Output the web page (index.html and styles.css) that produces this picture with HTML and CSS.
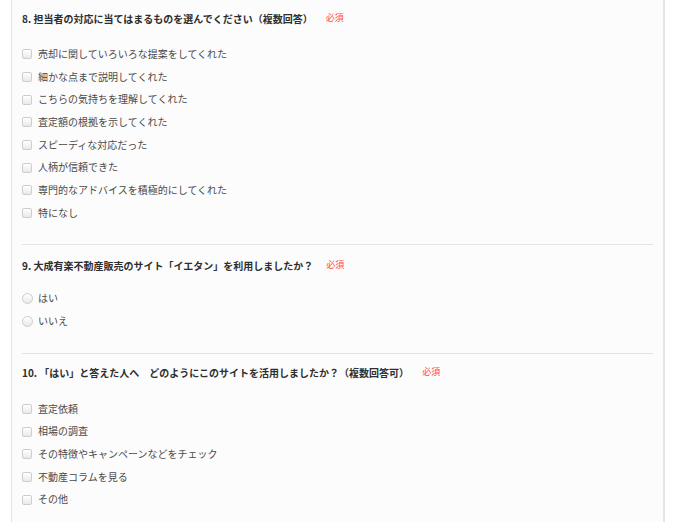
FILE: index.html
```html
<!DOCTYPE html>
<html lang="ja">

<head>
    <meta charset="UTF-8">
    <meta name="viewport" content="width=device-width, initial-scale=1.0">
    <title>アンケート</title>
    <link rel="stylesheet" href="styles.css">
</head>

<body>

    <div class="survey-container">

        <div class="question first">
            <h3>8. 担当者の対応に当てはまるものを選んでください（複数回答）<span class="required">必須</span></h3>
            <ul class="choices">
                <li><label><input type="checkbox" name="q8[]">売却に関していろいろな提案をしてくれた</label></li>
                <li><label><input type="checkbox" name="q8[]">細かな点まで説明してくれた</label></li>
                <li><label><input type="checkbox" name="q8[]">こちらの気持ちを理解してくれた</label></li>
                <li><label><input type="checkbox" name="q8[]">査定額の根拠を示してくれた</label></li>
                <li><label><input type="checkbox" name="q8[]">スピーディな対応だった</label></li>
                <li><label><input type="checkbox" name="q8[]">人柄が信頼できた</label></li>
                <li><label><input type="checkbox" name="q8[]">専門的なアドバイスを積極的にしてくれた</label></li>
                <li><label><input type="checkbox" name="q8[]">特になし</label></li>
            </ul>
        </div>

        <div class="question radio-question">
            <h3>9. 大成有楽不動産販売のサイト「イエタン」を利用しましたか？<span class="required">必須</span></h3>
            <ul class="choices">
                <li><label><input type="radio" name="q9">はい</label></li>
                <li><label><input type="radio" name="q9">いいえ</label></li>
            </ul>
        </div>

        <div class="question last">
            <h3>10. 「はい」と答えた人へ　どのようにこのサイトを活用しましたか？（複数回答可）<span class="required">必須</span></h3>
            <ul class="choices">
                <li><label><input type="checkbox" name="q10[]">査定依頼</label></li>
                <li><label><input type="checkbox" name="q10[]">相場の調査</label></li>
                <li><label><input type="checkbox" name="q10[]">その特徴やキャンペーンなどをチェック</label></li>
                <li><label><input type="checkbox" name="q10[]">不動産コラムを見る</label></li>
                <li><label><input type="checkbox" name="q10[]">その他</label></li>
            </ul>
        </div>

    </div>

</body>

</html>
```

FILE: styles.css
```css
body {
    margin: 0;
    background-color: #fff;
    font-family: "Noto Sans CJK JP", "Liberation Sans", sans-serif;
}

.survey-container {
    margin-left: 11px;
    width: 631px;
    padding: 0 10px;
    background-color: #fcfcfc;
    border-left: 1px solid #e6e6e6;
    border-right: 2px solid #e6e6e6;
    min-height: 522px;
}

.question {
    padding: 10px 0 20px;
    border-bottom: 1px solid #e4e4e4;
}

.question.first {
    padding-top: 8px;
}

.question.last {
    padding-top: 8px;
    border-bottom: none;
}

h3 {
    margin: 0 0 14px;
    font-size: 10px;
    line-height: 20px;
    font-weight: bold;
    color: #2e2e2e;
}

.radio-question h3 {
    margin-bottom: 11px;
}

.last h3 {
    margin-bottom: 15px;
}

.required {
    margin-left: 13px;
    font-size: 9px;
    font-weight: normal;
    color: #ff4a4a;
    vertical-align: 2px;
}

.choices {
    list-style: none;
    margin: 0;
    padding: 0;
}

.choices li {
    line-height: 22.65px;
    font-size: 10px;
    color: #4a4a4a;
}

.choices label {
    display: flex;
    align-items: center;
}

input {
    appearance: none;
    -webkit-appearance: none;
    margin: 0 6px 0 0;
    width: 10px;
    height: 10px;
    border: 1px solid #cdcdcd;
    background: linear-gradient(#ffffff, #e9e9e9);
    box-sizing: border-box;
}

input[type="checkbox"] {
    border-radius: 2px;
}

input[type="radio"] {
    width: 11px;
    height: 11px;
    margin-right: 5px;
    border-radius: 50%;
}
```
